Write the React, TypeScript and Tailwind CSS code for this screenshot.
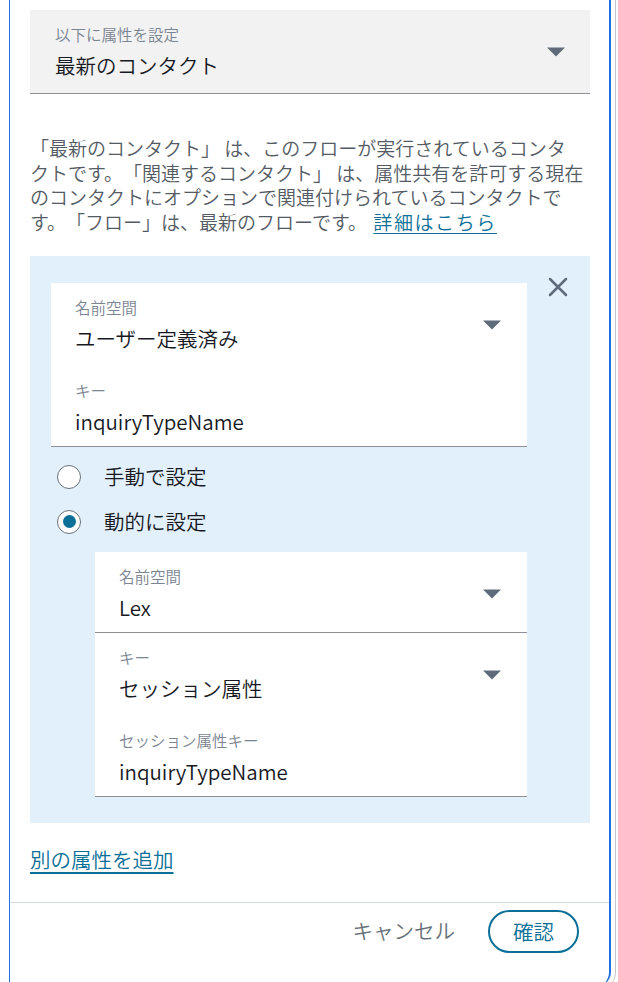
import React from 'react';

const Caret: React.FC = () => (
  <svg width="18" height="10" viewBox="0 0 18 10" className="shrink-0">
    <path d="M0 0.5h18L9 9.5z" fill="#5f6b7a" />
  </svg>
);

const Label: React.FC<{ text: string }> = ({ text }) => (
  <div className="text-[15.5px] leading-[20px] text-[#7b8592]">{text}</div>
);

const Value: React.FC<{ text: string }> = ({ text }) => (
  <div className="mt-[7px] text-[20.5px] leading-[28px] text-[#16191f]">{text}</div>
);

const SelectSection: React.FC<{ label: string; value: string; pb: string; className?: string }> = ({
  label,
  value,
  pb,
  className = '',
}) => (
  <div className={`flex items-center justify-between pl-[24px] pr-[26px] pt-[14px] ${pb} ${className}`}>
    <div>
      <Label text={label} />
      <Value text={value} />
    </div>
    <Caret />
  </div>
);

const InputSection: React.FC<{ label: string; value: string; pt: string }> = ({ label, value, pt }) => (
  <div className={`pl-[24px] ${pt} pb-[11px] border-b border-[#8d9096]`}>
    <Label text={label} />
    <Value text={value} />
  </div>
);

const Radio: React.FC<{ label: string; checked?: boolean }> = ({ label, checked }) => (
  <div className="h-[45px] flex items-center">
    <div className="ml-[6px] w-[24px] h-[24px] rounded-full border-[1.5px] border-[#687078] bg-white flex items-center justify-center">
      {checked && <div className="w-[13px] h-[13px] rounded-full bg-[#0b6f98]" />}
    </div>
    <span className="ml-[23px] pb-[2px] text-[20.5px] leading-[28px] text-[#16191f]">{label}</span>
  </div>
);

const App: React.FC = () => {
  return (
    <div className="w-[618px] h-[982px] bg-white overflow-hidden font-['Noto_Sans_CJK_JP',sans-serif] font-[350] [text-spacing-trim:space-all]">
      <div className="w-[616px] h-[990px] border-r border-[#c4c4cb] rounded-br-[18px]">
        <div className="ml-[9px] w-[602px] h-[986px] border-l-[1.5px] border-r-2 border-[#1f6fe5] rounded-br-[14px] flex flex-col">
          <div className="pl-[20px] pr-[19px]">
            {/* attribute target */}
            <div className="mt-[10px] bg-[#f2f2f2] border-b border-[#8d9096] flex items-center justify-between pl-[25px] pr-[25px] pt-[14px] pb-[14px]">
              <div>
                <Label text="以下に属性を設定" />
                <Value text="最新のコンタクト" />
              </div>
              <Caret />
            </div>

            <p className="mt-[42px] h-[98px] text-[19px] leading-[24.5px] text-[#545b64] whitespace-nowrap">
              「最新のコンタクト」 は、このフローが実行されているコンタ
              <br />
              クトです。「関連するコンタクト」 は、属性共有を許可する現在
              <br />
              のコンタクトにオプションで関連付けられているコンタクトで
              <br />
              す。「フロー」は、最新のフローです。{' '}
              <a className="ml-[2px] tracking-[1.6px] text-[#0b6f98] underline underline-offset-[3px]">詳細はこちら</a>
            </p>

            {/* attribute panel */}
            <div className="mt-[22px] bg-[#e2f0fb] pl-[21px] pt-[21px] pb-[26px] flex items-start">
              <div className="w-[476px] shrink-0">
                <div className="mt-[6px] bg-white">
                  <SelectSection label="名前空間" value="ユーザー定義済み" pb="pb-[14px]" />
                  <InputSection label="キー" value="inquiryTypeName" pt="pt-[14px]" />
                </div>

                <div className="mt-[7px]">
                  <Radio label="手動で設定" />
                  <Radio label="動的に設定" checked />
                </div>

                <div className="mt-[8px] ml-[44px] bg-white">
                  <SelectSection
                    label="名前空間"
                    value="Lex"
                    pb="pb-[11px]"
                    className="border-b border-[#8d9096]"
                  />
                  <SelectSection label="キー" value="セッション属性" pb="pb-[15px]" />
                  <InputSection label="セッション属性キー" value="inquiryTypeName" pt="pt-[13px]" />
                </div>
              </div>
              <button className="ml-[21px] w-[20px] h-[20px] flex items-center justify-center">
                <svg width="20" height="20" viewBox="0 0 20 20">
                  <path d="M2 2L18 18M18 2L2 18" stroke="#5f6b7a" strokeWidth="2.5" strokeLinecap="round" />
                </svg>
              </button>
            </div>

            <a className="mt-[22px] inline-block text-[20.5px] leading-[28px] text-[#0b6f98] underline underline-offset-[4px]">
              別の属性を追加
            </a>
          </div>

          {/* footer */}
          <div className="mt-[29px] border-t border-[#d5dbdb] flex justify-end items-center pr-[30px] pt-[7px]">
            <button className="pb-[4px] text-[20.5px] leading-[28px] text-[#687078]">キャンセル</button>
            <button className="ml-[33px] w-[91px] h-[43px] pb-[2px] rounded-full border-[2.5px] border-[#0b6f98] text-[20.5px] leading-[28px] text-[#0b6f98]">
              確認
            </button>
          </div>
        </div>
      </div>
    </div>
  );
};

export default App;
